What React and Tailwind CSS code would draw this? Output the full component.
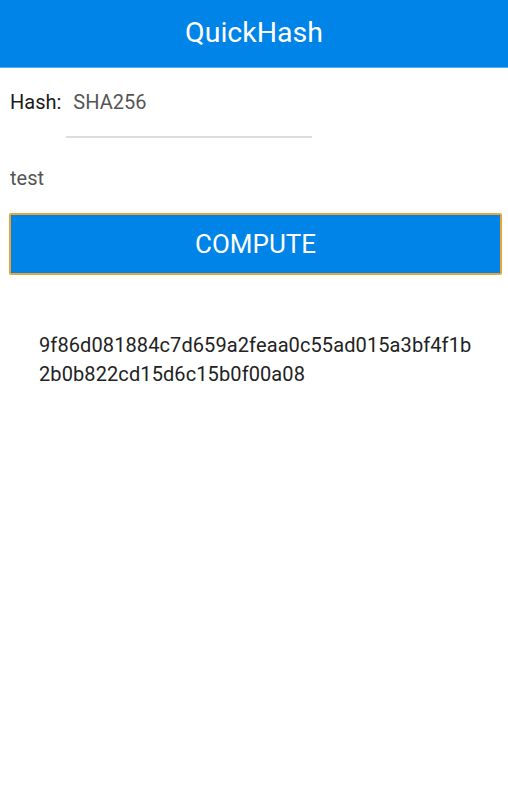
export default function App() {
  const hash = "9f86d081884c7d659a2feaa0c55ad015a3bf4f1b2b0b822cd15d6c15b0f00a08";

  return (
    <div className="min-h-[800px] bg-white font-['Roboto',sans-serif]">
      <header className="h-[68px] bg-[#0084e8] border-b border-[#5aaef0] flex items-center justify-center">
        <h1 className="text-white text-[28.5px] leading-none">QuickHash</h1>
      </header>

      <div className="px-[10px]">
        <div className="flex items-start pt-[22px]">
          <span className="text-[20px] leading-[24px] text-[#1a1a1a]">Hash:</span>
          <div className="ml-[5px] w-[246px]">
            <div className="pl-[7px] text-[20px] leading-[24px] text-[#555]">SHA256</div>
            <div className="mt-[22px] h-[2px] bg-[#dcdcdc]" />
          </div>
        </div>

        <div className="pt-[28px] text-[20px] leading-[24px] text-[#555]">test</div>

        <button className="mt-[23px] w-[493px] -ml-[1px] h-[62px] bg-[#0084e8] border-2 border-[#e8a53a] rounded-[2px] flex items-center justify-center">
          <span className="text-white text-[26px] leading-none">COMPUTE</span>
        </button>

        <p className="mt-[56px] ml-[29px] w-[434px] break-all text-[20px] leading-[29px] tracking-[0.1px] text-[#222]">
          {hash}
        </p>
      </div>
    </div>
  );
}
